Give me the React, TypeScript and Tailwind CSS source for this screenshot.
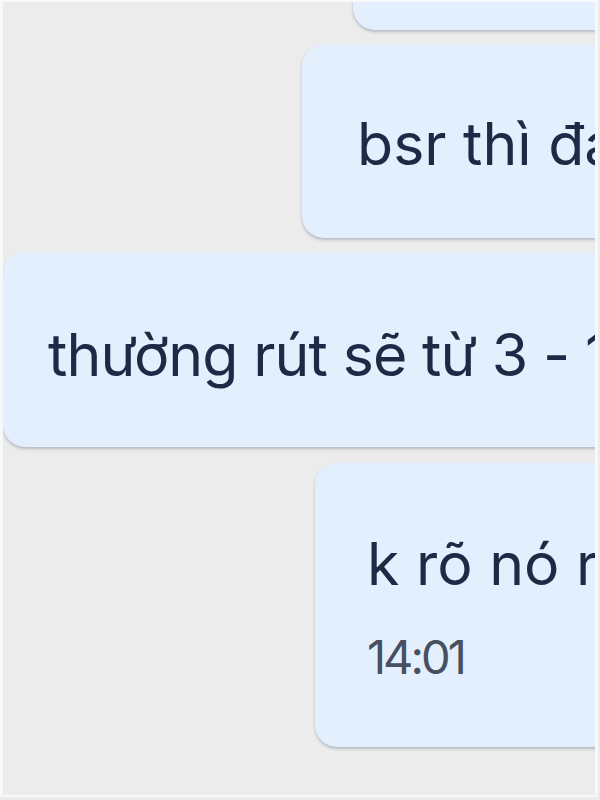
import React from "react";

const font = { fontFamily: 'Inter, "Noto Sans", sans-serif' };

const App = () => {
  return (
    <div className="w-[600px] h-[800px] bg-[#ebebed] overflow-hidden" style={font}>
      <div className="w-[598px] h-[797px] border-l-[3px] border-t-2 border-r-[3px] border-b-2 border-[#f7f8fa] bg-[#ececed] overflow-hidden flex flex-col">
        {/* previous message, cut off at the top */}
        <div className="ml-[350px] mt-[-72px] w-[400px] h-[100px] shrink-0 rounded-[22px] bg-[#e3effd] shadow-[0_2px_3px_rgba(60,70,95,0.3)]" />

        <div className="ml-[299px] mt-[14px] w-[400px] h-[194px] shrink-0 rounded-[22px] bg-[#e3effd] shadow-[0_2px_3px_rgba(60,70,95,0.3)] flex items-center pl-[55px] pt-[4px]">
          <p className="whitespace-nowrap text-[59px] leading-none text-[#1c2a45]">bsr thì đang rút</p>
        </div>

        <div className="ml-0 mt-[14px] w-[700px] h-[195px] shrink-0 rounded-[22px] bg-[#e3effd] shadow-[0_2px_3px_rgba(60,70,95,0.3)] flex items-center pl-[45px] pt-[10px]">
          <p className="whitespace-nowrap text-[59px] leading-none tracking-[-0.9px] text-[#1c2a45]">thường rút sẽ từ 3 - 10 ngày</p>
        </div>

        <div className="ml-[312px] mt-[16px] w-[400px] h-[284px] shrink-0 rounded-[22px] bg-[#e3effd] shadow-[0_2px_3px_rgba(60,70,95,0.3)] flex flex-col pl-[52px] pt-[71px] gap-[40px]">
          <p className="whitespace-nowrap text-[59px] leading-none text-[#1c2a45]">k rõ nó rút bao nhiêu</p>
          <p className="whitespace-nowrap text-[47px] leading-none tracking-[-3px] text-[#465061]">14:01</p>
        </div>
      </div>
    </div>
  );
};

export default App;
